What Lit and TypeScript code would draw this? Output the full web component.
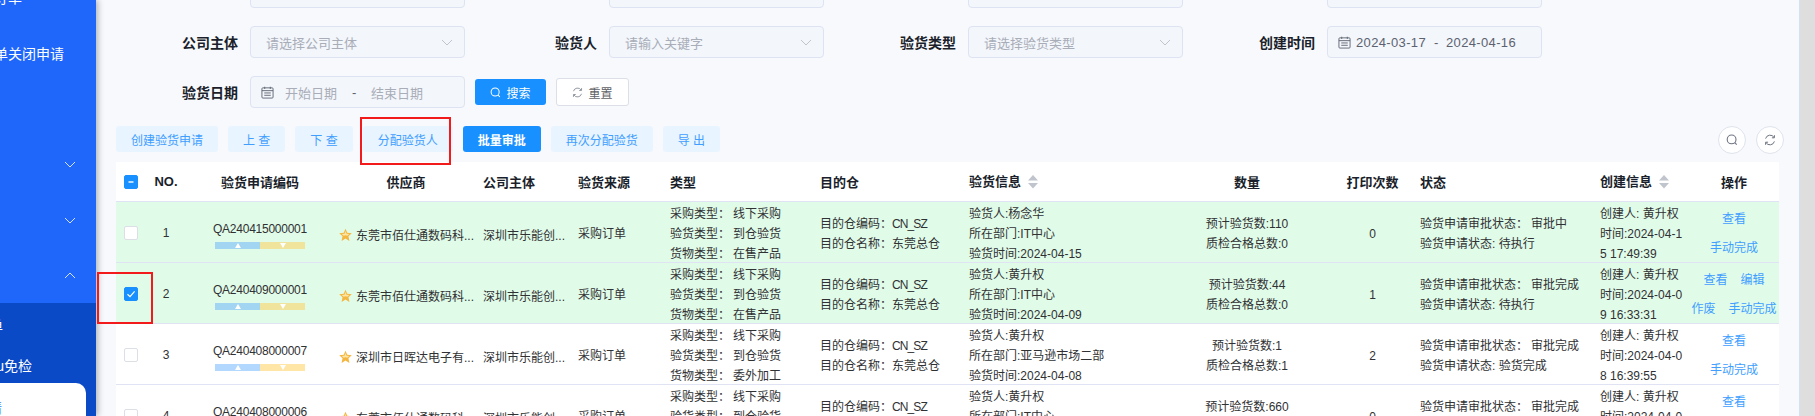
import { LitElement, html, css, svg } from "lit";
import { customElement } from "lit/decorators.js";

const chevron = (up = false) => html`<svg class="chev" viewBox="0 0 12 7"><polyline points=${up ? "1,6 6,1 11,6" : "1,1 6,6 11,1"} fill="none" stroke="currentColor" stroke-width="1"></polyline></svg>`;
const calendar = html`<svg class="cal" viewBox="0 0 14 14" fill="none" stroke="#5f6472" stroke-width="1"><rect x="1" y="2" width="12" height="11" rx="1"></rect><path d="M1 5h12M4 .8v2.4M10 .8v2.4M3.5 7.5h7M3.5 10h7" ></path></svg>`;
const search = html`<svg class="ic" viewBox="0 0 12 12" fill="none" stroke="currentColor" stroke-width="1.1"><circle cx="5.6" cy="5.4" r="4.4"></circle><path d="M8.8 8.7l1.9 2"></path></svg>`;
const refresh = html`<svg class="ic" viewBox="0 0 12 12" fill="none" stroke="currentColor" stroke-width="1"><path d="M1.6 4.6A4.6 4.6 0 0 1 10 3.4M10.4 7.4A4.6 4.6 0 0 1 2 8.6"></path><path d="M10.4 1.2v2.6H7.9M1.6 10.8V8.2h2.5"></path></svg>`;
const star = svg`<polygon points="7,0.4 8.9,4.6 13.8,5.1 10.2,8.3 11.2,13.4 7,10.8 2.8,13.4 3.8,8.3 0.2,5.1 5.1,4.6" fill="#f4b63f"></polygon><polygon points="7,2.8 8.1,5.6 11.2,5.9 8.9,7.9 7,7.3 5.1,7.9 2.8,5.9 5.9,5.6" fill="#fbe6a6"></polygon>`;

interface Row {
  green?: boolean; checked?: boolean; no: number; code: string; supplier: string;
  goods: string; person: string; dept: string; date: string; plan: number; pass: number;
  print: number; approve: string; state: string; t1: string; t2: string; ops: string[][];
}

const rows: Row[] = [
  { green: true, no: 1, code: "QA240415000001", supplier: "东莞市佰仕通数码科...", goods: "在售产品", person: "杨念华", dept: "IT中心", date: "2024-04-15", plan: 110, pass: 0, print: 0, approve: "审批中", state: "待执行", t1: "2024-04-1", t2: "5 17:49:39", ops: [["查看"], ["手动完成"]] },
  { green: true, checked: true, no: 2, code: "QA240409000001", supplier: "东莞市佰仕通数码科...", goods: "在售产品", person: "黄升权", dept: "IT中心", date: "2024-04-09", plan: 44, pass: 0, print: 1, approve: "审批完成", state: "待执行", t1: "2024-04-0", t2: "9 16:33:31", ops: [["查看", "编辑"], ["作废", "手动完成"]] },
  { no: 3, code: "QA240408000007", supplier: "深圳市日晖达电子有...", goods: "委外加工", person: "黄升权", dept: "亚马逊市场二部", date: "2024-04-08", plan: 1, pass: 1, print: 2, approve: "审批完成", state: "验货完成", t1: "2024-04-0", t2: "8 16:39:55", ops: [["查看"], ["手动完成"]] },
  { no: 4, code: "QA240408000006", supplier: "东莞市佰仕通数码科...", goods: "在售产品", person: "黄升权", dept: "IT中心", date: "2024-04-08", plan: 660, pass: 0, print: 0, approve: "审批完成", state: "待执行", t1: "2024-04-0", t2: "8 15:21:08", ops: [["查看"], ["手动完成"]] },
];

@customElement("app-root")
export class AppRoot extends LitElement {
  static styles = css`
    :host { display: block; width: 1815px; height: 416px; overflow: hidden; font-family: "Liberation Sans", "Noto Sans CJK SC", sans-serif; color: #303133; font-size: 12px; }
    .shell { display: flex; height: 416px; position: relative; overflow: hidden; }
    .side { width: 96px; flex: none; background: #1f66fb; color: #fff; overflow: hidden; font-size: 14px; box-shadow: 2px 0 6px rgba(0, 21, 41, .3); position: relative; z-index: 1; display: flex; flex-direction: column; }
    .item { height: 56px; flex: none; display: flex; align-items: center; justify-content: flex-end; white-space: nowrap; position: relative; }
    .item.first { margin-top: -31px; padding-right: 74px; }
    .item.close { padding-right: 32px; }
    .item.last { height: 54px; }
    .chev { width: 12px; height: 7px; flex: none; }
    .item .chev { position: absolute; left: 64px; top: 50%; margin-top: -4px; color: #d5e3ff; }
    .sub { flex: 1; background: #0b4ac6; display: flex; flex-direction: column; }
    .sub-item { display: flex; align-items: center; justify-content: flex-end; white-space: nowrap; flex: none; }
    .s1 { height: 44px; padding-right: 93px; }
    .s2 { height: 36px; padding-right: 64px; }
    .pill { height: 48px; width: 86px; background: #fff; border-radius: 0 10px 10px 0; color: #2f7fff; padding-right: 84px; box-sizing: border-box; }

    .main { flex: 1; min-width: 0; background: #f8f9fc; padding: 0 20px; overflow: hidden; border-right: 1px solid #d3e2f3; box-sizing: border-box; }
    .scroll { width: 15px; flex: none; background: #dedede; }

    .filters { display: grid; grid-template-columns: repeat(4, 359px); row-gap: 18px; margin-top: -24px; }
    .cell { display: flex; align-items: center; height: 32px; }
    .label { width: 122px; margin-right: 12px; text-align: right; font-size: 14px; font-weight: 700; color: #1a1f2b; flex: none; }
    .field { width: 215px; height: 32px; box-sizing: border-box; flex: none; background: #f3f6fb; border: 1px solid #dde3f2; border-radius: 4px; display: flex; align-items: center; padding: 0 11px 0 15px; font-size: 13px; color: #a8adb8; justify-content: space-between; }
    .field .chev { color: #c0c4cc; }
    .range { justify-content: flex-start; padding: 0 0 0 10px; }
    .cal { width: 13px; height: 13px; flex: none; }
    .range .a { margin-left: 11px; width: 52px; }
    .range .dash { margin: 0 15px; width: 4px; text-align: center; color: #606266; }
    .range.filled { color: #5c6270; padding-left: 10px; letter-spacing: .35px; }
    .range.filled .a { margin-left: 5px; width: auto; }
    .range.filled .dash { margin: 0 8px; }
    .btn { height: 26px; box-sizing: border-box; border-radius: 3px; display: inline-flex; align-items: center; justify-content: center; font-size: 12px; flex: none; }
    .ic { width: 11px; height: 11px; margin-right: 5px; flex: none; }
    .search { width: 71px; background: #1890ff; color: #fff; margin-left: 10px; }
    .reset { width: 73px; height: 28px; background: #fff; border: 1px solid #dcdfe6; color: #606266; margin-left: 10px; }
    .reset .ic { color: #8a8f99; }

    .toolbar { display: flex; justify-content: space-between; margin-top: 18px; height: 36px; margin-right: -5px; }
    .tools { display: flex; gap: 10px; }
    .light { background: #e8f4ff; color: #409eff; padding: 0 15px; }
    .primary { background: #1890ff; color: #fff; padding: 0 15px; font-weight: 700; }
    .rounds { display: flex; gap: 10px; }
    .round { width: 28px; height: 28px; box-sizing: border-box; border-radius: 50%; border: 1px solid #dfe3ee; background: #fff; display: flex; align-items: center; justify-content: center; color: #6e7480; }
    .round .ic { width: 12px; height: 12px; margin: 0; }

    .table { background: #fff; }
    .tr { display: grid; grid-template-columns: 30px 40px 148px 144px 95px 92px 150px 149px 200px 166px 85px 180px 93px 92px; height: 60px; border-bottom: 1px solid #dfe3f3; align-items: center; }
    .tr.head { height: 39px; font-size: 13px; font-weight: 700; color: #1a1f2b; }
    .tr.green { background: #e1fbe9; }
    .tr > div { min-width: 0; }
    .pl { padding-left: 5px; }
    .ctr { text-align: center; }
    .sort { display: flex; align-items: center; gap: 7px; }
    .sort span { padding-bottom: 3px; }
    .sort svg { width: 10px; height: 14px; flex: none; }
    .box { width: 14px; height: 14px; box-sizing: border-box; border-radius: 2px; border: 1px solid #dcdfe6; background: #fff; margin: 0 auto; display: flex; align-items: center; justify-content: center; }
    .box.on { background: #1890ff; border-color: #1890ff; }
    .box svg { width: 10px; height: 10px; }
    .lines { line-height: 20px; padding-top: 2px; }
    .code { text-align: center; padding-top: 3px; line-height: 16px; letter-spacing: -.25px; }
    .bar { width: 90px; height: 7px; margin: 5px auto 0; display: flex; }
    .bar i { flex: 1; display: flex; align-items: center; justify-content: center; }
    .bar i:first-child { background: rgba(64, 158, 255, .4); }
    .bar i:last-child { background: rgba(255, 204, 77, .5); }
    .tri { width: 6px; height: 5px; }
    .sup { display: flex; align-items: center; gap: 4px; padding: 2px 0 0 5px; white-space: nowrap; }
    .sup svg { width: 13px; height: 14px; flex: none; margin-top: 2px; }
    .v1 { margin-left: 3px; }
    .latin { letter-spacing: -.9px; }
    .ops { padding-top: 1px; color: #409eff; }
    .op-line { display: flex; justify-content: center; gap: 13px; line-height: 29px; }
    .mark { position: absolute; border: 2px solid #f21a1a; box-sizing: border-box; pointer-events: none; z-index: 2; }
    .m1 { left: 360px; top: 117px; width: 91px; height: 48px; }
    .m2 { left: 97px; top: 272px; width: 56px; height: 52px; }
  `;

  private renderRow(r: Row) {
    return html`<div class="tr ${r.green ? "green" : ""}">
      <div><span class="box ${r.checked ? "on" : ""}">${r.checked ? html`<svg viewBox="0 0 10 10"><polyline points="1.5,5.2 4,7.6 8.6,2.4" fill="none" stroke="#fff" stroke-width="1.2"></polyline></svg>` : ""}</span></div>
      <div class="ctr">${r.no}</div>
      <div class="code">${r.code}<div class="bar"><i><svg class="tri" viewBox="0 0 6 5"><polygon points="3,0 6,5 0,5" fill="#fff"></polygon></svg></i><i><svg class="tri" viewBox="0 0 6 5"><polygon points="0,0 6,0 3,5" fill="#fff"></polygon></svg></i></div></div>
      <div class="sup"><svg viewBox="0 0 14 14">${star}</svg><span>${r.supplier}</span></div>
      <div class="sup"><span>深圳市乐能创...</span></div>
      <div class="pl lines">采购订单</div>
      <div class="pl lines">
        <div>采购类型：<span class="v1">线下采购</span></div>
        <div>验货类型：<span class="v1">到仓验货</span></div>
        <div>货物类型：<span class="v1">${r.goods}</span></div>
      </div>
      <div class="pl lines">
        <div>目的仓编码：<span class="latin">CN_SZ</span></div>
        <div>目的仓名称：东莞总仓</div>
      </div>
      <div class="pl lines">
        <div>验货人:${r.person}</div>
        <div>所在部门:${r.dept}</div>
        <div>验货时间:${r.date}</div>
      </div>
      <div class="ctr lines">
        <div>预计验货数:${r.plan}</div>
        <div>质检合格总数:${r.pass}</div>
      </div>
      <div class="ctr lines">${r.print}</div>
      <div class="pl lines">
        <div>验货申请审批状态：<span class="v1">${r.approve}</span></div>
        <div>验货申请状态: ${r.state}</div>
      </div>
      <div class="pl lines">
        <div>创建人: 黄升权</div>
        <div>时间:${r.t1}</div>
        <div>${r.t2}</div>
      </div>
      <div class="ops">${r.ops.map((l) => html`<div class="op-line">${l.map((o) => html`<span>${o}</span>`)}</div>`)}</div>
    </div>`;
  }

  private sortIcon() {
    return html`<svg viewBox="0 0 10 14"><polygon points="5,0 10,5.5 0,5.5" fill="#c0c4cc"></polygon><polygon points="0,8 10,8 5,13.5" fill="#c0c4cc"></polygon></svg>`;
  }

  render() {
    const blanks = [0, 1, 2, 3];
    return html`<div class="shell">
      <aside class="side">
        <div class="item first">采购订单</div>
        <div class="item close">采购订单关闭申请</div>
        <div class="item"></div>
        <div class="item">${chevron()}</div>
        <div class="item">${chevron()}</div>
        <div class="item last">${chevron(true)}</div>
        <div class="sub">
          <div class="sub-item s1">验货单</div>
          <div class="sub-item s2">验货sku免检</div>
          <div class="sub-item pill">验货申请</div>
        </div>
      </aside>
      <main class="main">
        <div class="filters">
          ${blanks.map(() => html`<div class="cell"><span class="label"></span><div class="field"></div></div>`)}
          <div class="cell"><span class="label">公司主体</span><div class="field">请选择公司主体${chevron()}</div></div>
          <div class="cell"><span class="label">验货人</span><div class="field">请输入关键字${chevron()}</div></div>
          <div class="cell"><span class="label">验货类型</span><div class="field">请选择验货类型${chevron()}</div></div>
          <div class="cell"><span class="label">创建时间</span><div class="field range filled">${calendar}<span class="a">2024-03-17</span><span class="dash">-</span><span>2024-04-16</span></div></div>
          <div class="cell"><span class="label">验货日期</span><div class="field range">${calendar}<span class="a">开始日期</span><span class="dash">-</span><span>结束日期</span></div>
            <span class="btn search">${search}搜索</span><span class="btn reset">${refresh}重置</span></div>
        </div>
        <div class="toolbar">
          <div class="tools">
            <span class="btn light">创建验货申请</span>
            <span class="btn light">上 查</span>
            <span class="btn light">下 查</span>
            <span class="btn light">分配验货人</span>
            <span class="btn primary">批量审批</span>
            <span class="btn light">再次分配验货</span>
            <span class="btn light">导 出</span>
          </div>
          <div class="rounds">
            <span class="round">${search}</span>
            <span class="round">${refresh}</span>
          </div>
        </div>
        <div class="table">
          <div class="tr head">
            <div><span class="box on"><svg viewBox="0 0 10 10"><path d="M2.5 5h5" stroke="#fff" stroke-width="1.4"></path></svg></span></div>
            <div class="ctr">NO.</div>
            <div class="ctr">验货申请编码</div>
            <div class="ctr">供应商</div>
            <div class="pl">公司主体</div>
            <div class="pl">验货来源</div>
            <div class="pl">类型</div>
            <div class="pl">目的仓</div>
            <div class="pl sort"><span>验货信息</span>${this.sortIcon()}</div>
            <div class="ctr">数量</div>
            <div class="ctr">打印次数</div>
            <div class="pl">状态</div>
            <div class="pl sort"><span>创建信息</span>${this.sortIcon()}</div>
            <div class="ctr">操作</div>
          </div>
          ${rows.map((r) => this.renderRow(r))}
        </div>
      </main>
      <div class="scroll"></div>
      <div class="mark m1"></div>
      <div class="mark m2"></div>
    </div>`;
  }
}
